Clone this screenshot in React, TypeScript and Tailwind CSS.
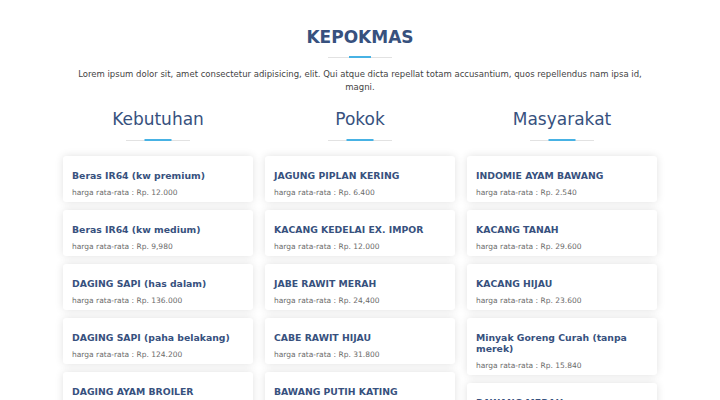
import React from "react";

type Item = { name: string; price: string };

const columns: { title: string; items: Item[] }[] = [
  {
    title: "Kebutuhan",
    items: [
      { name: "Beras IR64 (kw premium)", price: "12.000" },
      { name: "Beras IR64 (kw medium)", price: "9,980" },
      { name: "DAGING SAPI (has dalam)", price: "136.000" },
      { name: "DAGING SAPI (paha belakang)", price: "124.200" },
      { name: "DAGING AYAM BROILER", price: "36.000" },
    ],
  },
  {
    title: "Pokok",
    items: [
      { name: "JAGUNG PIPLAN KERING", price: "6.400" },
      { name: "KACANG KEDELAI EX. IMPOR", price: "12.000" },
      { name: "JABE RAWIT MERAH", price: "24,400" },
      { name: "CABE RAWIT HIJAU", price: "31.800" },
      { name: "BAWANG PUTIH KATING", price: "32.000" },
    ],
  },
  {
    title: "Masyarakat",
    items: [
      { name: "INDOMIE AYAM BAWANG", price: "2.540" },
      { name: "KACANG TANAH", price: "29.600" },
      { name: "KACANG HIJAU", price: "23.600" },
      { name: "Minyak Goreng Curah (tanpa merek)", price: "15.840" },
      { name: "BAWANG MERAH", price: "38.000" },
    ],
  },
];

function Divider({ blue }: { blue: string }) {
  return (
    <div className="relative mx-auto h-[2px] w-[64px]">
      <div className="absolute left-0 right-0 top-[1px] h-[1px] bg-[#e2e2e2]" />
      <div className={`absolute top-0 left-1/2 h-[2px] -translate-x-1/2 bg-[#47b2e4] ${blue}`} />
    </div>
  );
}

export default function App() {
  return (
    <div
      className="min-h-[400px] bg-white"
      style={{ fontFamily: '"DejaVu Sans", Verdana, sans-serif' }}
    >
      <div className="mx-auto w-[594px] pt-[27px]">
        <h2 className="text-center text-[17px] font-bold leading-[20px] text-[#37517e]">
          KEPOKMAS
        </h2>
        <div className="mt-[9px]">
          <Divider blue="w-[22px]" />
        </div>
        <p className="mx-auto mt-[10px] w-[584px] text-center text-[8.5px] leading-[13px] text-[#444444]">
          Lorem ipsum dolor sit, amet consectetur adipisicing, elit. Qui atque dicta repellat totam
          accusantium, quos repellendus nam ipsa id, magni.
        </p>
        <div className="mt-[15px] grid grid-cols-3 gap-x-[12px]">
          {columns.map((col) => (
            <div key={col.title} className="flex flex-col">
              <h3 className="text-center text-[17px] font-normal leading-[20px] text-[#37517e]">
                {col.title}
              </h3>
              <div className="mt-[10px]">
                <Divider blue="w-[27px]" />
              </div>
              <div className="mt-[15px] flex flex-col gap-[8px]">
                {col.items.map((it) => (
                  <div
                    key={it.name}
                    className="rounded-[3px] bg-white px-[9px] pb-[5px] pt-[14px] shadow-[0_0_8px_rgba(0,0,0,0.12)]"
                  >
                    <h4 className="text-[9.3px] font-bold leading-[11px] text-[#37517e]">
                      {it.name}
                    </h4>
                    <p className="mt-[7px] text-[7.5px] leading-[9px] text-[#6b6b6b]">
                      harga rata-rata : Rp. {it.price}
                    </p>
                  </div>
                ))}
              </div>
            </div>
          ))}
        </div>
      </div>
    </div>
  );
}
